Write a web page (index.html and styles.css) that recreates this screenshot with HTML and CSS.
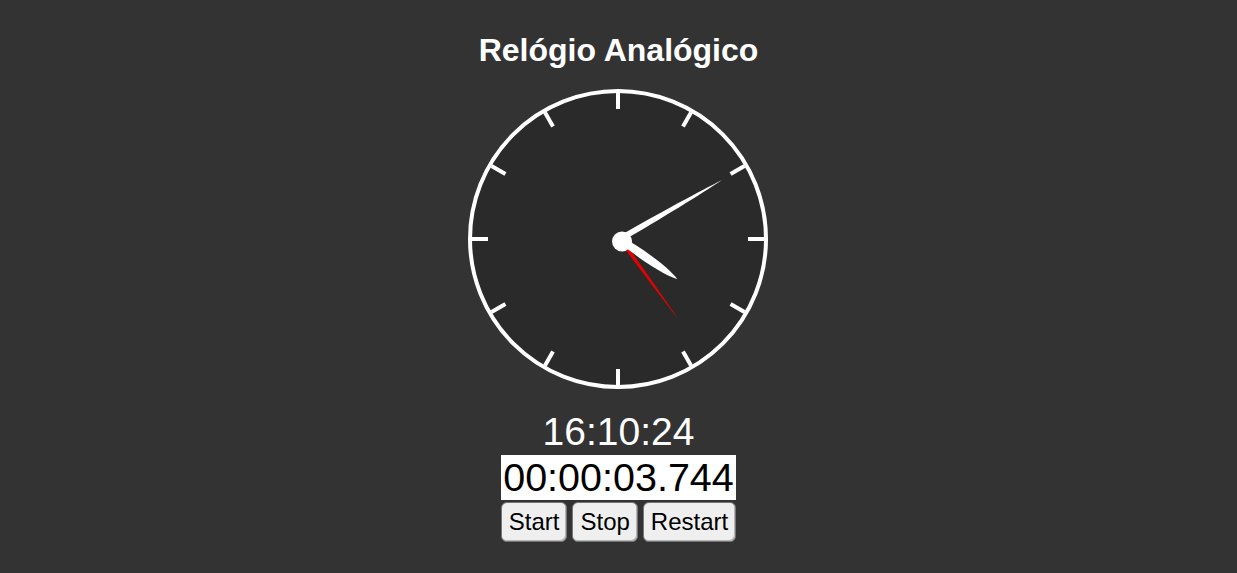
FILE: index.html
```html
<!DOCTYPE html>
<html lang="pt">
<head>
<meta charset="utf-8">
<title>Relógio Analógico</title>
<link rel="stylesheet" href="styles.css">
</head>
<body>
<main class="app">
  <h1 class="title">Relógio Analógico</h1>
  <svg class="clock" width="300" height="300" viewBox="0 0 300 300" aria-label="Relógio">
    <circle cx="150" cy="150" r="148" fill="#2a2a2a" stroke="#ffffff" stroke-width="4"/>
    <g stroke="#ffffff" stroke-width="4">
      <line x1="150" y1="4" x2="150" y2="20"/>
      <line x1="150" y1="4" x2="150" y2="20" transform="rotate(30 150 150)"/>
      <line x1="150" y1="4" x2="150" y2="20" transform="rotate(60 150 150)"/>
      <line x1="150" y1="4" x2="150" y2="20" transform="rotate(90 150 150)"/>
      <line x1="150" y1="4" x2="150" y2="20" transform="rotate(120 150 150)"/>
      <line x1="150" y1="4" x2="150" y2="20" transform="rotate(150 150 150)"/>
      <line x1="150" y1="4" x2="150" y2="20" transform="rotate(180 150 150)"/>
      <line x1="150" y1="4" x2="150" y2="20" transform="rotate(210 150 150)"/>
      <line x1="150" y1="4" x2="150" y2="20" transform="rotate(240 150 150)"/>
      <line x1="150" y1="4" x2="150" y2="20" transform="rotate(270 150 150)"/>
      <line x1="150" y1="4" x2="150" y2="20" transform="rotate(300 150 150)"/>
      <line x1="150" y1="4" x2="150" y2="20" transform="rotate(330 150 150)"/>
    </g>
    <path d="M -1.9 0 C -1.6 -40 -0.8 -80 0 -99 C 0.8 -80 1.6 -40 1.9 0 Z" fill="#e60000" transform="translate(152 150) rotate(144)"/>
    <path d="M -3 0 C -5 -22 -5 -55 0 -70 C 5 -55 5 -22 3 0 Z" fill="#ffffff" transform="translate(152 150) rotate(125)"/>
    <path d="M -3 0 C -3 -45 -1.4 -95 0 -118 C 1.4 -95 3 -45 3 0 Z" fill="#ffffff" transform="translate(152 150) rotate(60)"/>
    <circle cx="154" cy="152.5" r="10" fill="#ffffff"/>
  </svg>
  <div class="time">16:10:24</div>
  <div class="stopwatch">00:00:03.744</div>
  <div class="controls">
    <button class="btn" type="button">Start</button>
    <button class="btn" type="button">Stop</button>
    <button class="btn" type="button">Restart</button>
  </div>
</main>
</body>
</html>
```

FILE: styles.css
```css
html, body {
  margin: 0;
  padding: 0;
  background: #333333;
}

body {
  font-family: "Liberation Sans", Arial, sans-serif;
  color: #ffffff;
}

.app {
  display: flex;
  flex-direction: column;
  align-items: center;
  padding-top: 32px;
}

.title {
  margin: 0;
  font-size: 32px;
  line-height: 37px;
  font-weight: bold;
  color: #ffffff;
}

.clock {
  display: block;
  margin-top: 19.5px;
  margin-left: -1px;
}

.time {
  margin-top: 20px;
  font-size: 39px;
  line-height: 45px;
  color: #ffffff;
}

.stopwatch {
  margin-top: 1px;
  padding: 1px 2px;
  font-size: 39.5px;
  line-height: 43px;
  color: #000000;
  background: #ffffff;
}

.controls {
  display: flex;
  gap: 5px;
  margin-top: 2.5px;
}

.btn {
  font-family: "Liberation Sans", Arial, sans-serif;
  font-size: 24px;
  line-height: 28px;
  padding: 5px 7px;
  color: #000000;
  background: #efefef;
  border: 1px solid #767676;
  border-radius: 6px;
  box-shadow: inset -1px -1px 0 #b5b5b5;
}
```
